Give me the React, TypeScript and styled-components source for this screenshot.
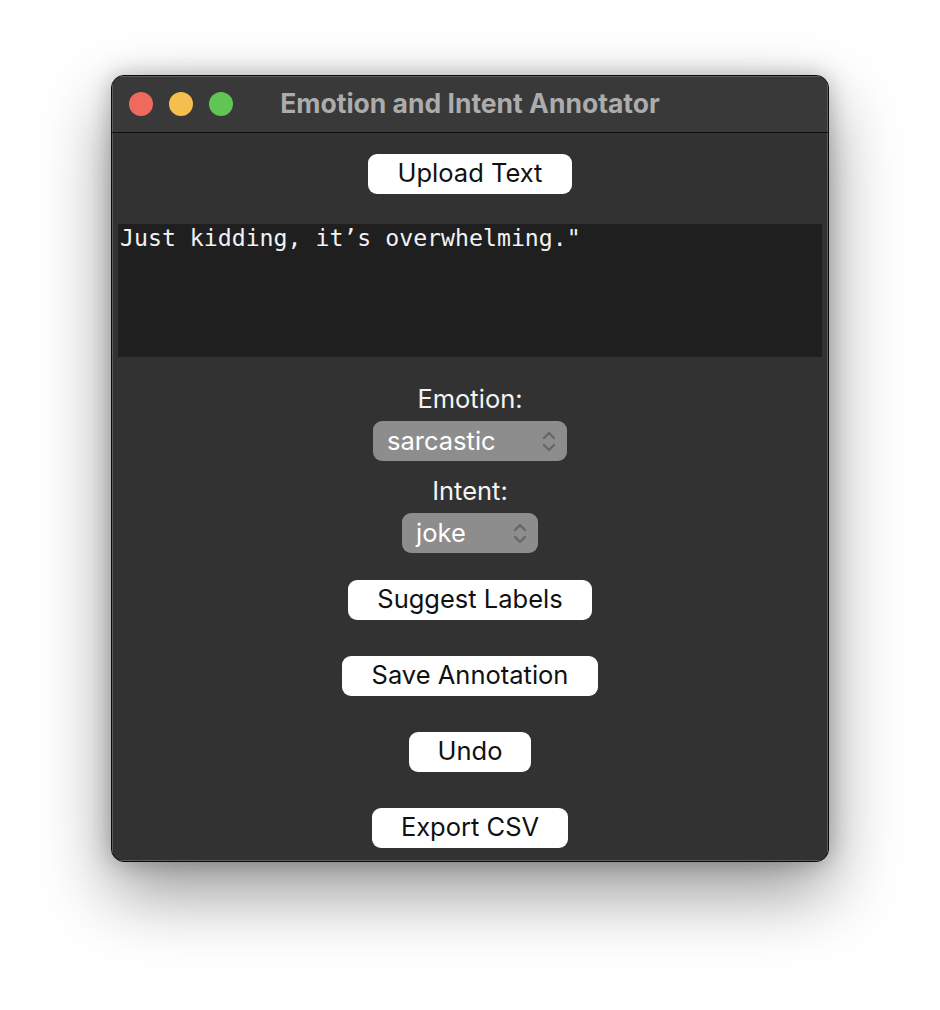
import React from "react";
import styled, { createGlobalStyle } from "styled-components";

const Global = createGlobalStyle`
  html, body { margin: 0; padding: 0; background: #ffffff; }
  body { font-family: "Inter", "Noto Sans", sans-serif; }
`;

const Page = styled.div`
  display: flex;
  justify-content: center;
  padding-top: 75px;
  height: 1010px;
  box-sizing: border-box;
`;

const Window = styled.div`
  width: 718px;
  height: 787px;
  box-sizing: border-box;
  border-radius: 13px;
  border: 1px solid #0a0a0a;
  background: #323232;
  box-shadow: 0 30px 70px rgba(0, 0, 0, 0.42), 0 0 22px rgba(0, 0, 0, 0.25);
  overflow: hidden;
  display: flex;
  flex-direction: column;
`;

const TitleBar = styled.div`
  height: 56px;
  flex: none;
  display: flex;
  align-items: center;
  position: relative;
  background: #393939;
  border-bottom: 1px solid #0e0e0e;
  padding-left: 17px;
  box-shadow: inset 0 1px 0 #5c5c5c, inset 1px 0 0 #5c5c5c, inset -1px 0 0 #5c5c5c;
`;

const Lights = styled.div`
  display: flex;
  gap: 16px;
`;

const Light = styled.span<{ $c: string }>`
  width: 24px;
  height: 24px;
  border-radius: 50%;
  background: ${(p) => p.$c};
`;

const Title = styled.div`
  position: absolute;
  left: 0;
  right: 0;
  top: 0;
  bottom: 3px;
  display: flex;
  align-items: center;
  justify-content: center;
  font-weight: 700;
  font-size: 26.5px;
  color: #acacac;
  pointer-events: none;
`;

const Content = styled.div`
  flex: 1;
  display: flex;
  flex-direction: column;
  align-items: center;
  padding: 21px 6px 0 6px;
  box-shadow: inset 1px 0 0 #5c5c5c, inset -1px 0 0 #5c5c5c, inset 0 -1px 0 #5c5c5c;
`;

const Button = styled.button<{ $w: number; $mt: number }>`
  width: ${(p) => p.$w}px;
  height: 40px;
  margin-top: ${(p) => p.$mt}px;
  background: #ffffff;
  color: #111;
  border: none;
  border-radius: 9px;
  font-family: "Inter", "Noto Sans", sans-serif;
  font-size: 25.5px;
  padding: 0 0 3px 0;
  box-sizing: border-box;
  display: flex;
  align-items: center;
  justify-content: center;
  flex: none;
`;

const TextArea = styled.div`
  align-self: stretch;
  height: 133px;
  margin-top: 30px;
  background: #1f1f1f;
  color: #f2f2f2;
  font-family: "DejaVu Sans Mono", monospace;
  font-size: 23.2px;
  line-height: 28px;
  padding: 0 2px;
  box-sizing: border-box;
  white-space: pre;
`;

const Label = styled.div<{ $mt: number }>`
  margin-top: ${(p) => p.$mt}px;
  height: 28px;
  line-height: 28px;
  color: #f4f4f4;
  font-size: 25.5px;
`;

const Select = styled.div<{ $w: number }>`
  margin-top: 8px;
  width: ${(p) => p.$w}px;
  height: 40px;
  box-sizing: border-box;
  border-radius: 9px;
  background: #8d8d8d;
  display: flex;
  align-items: center;
  justify-content: space-between;
  padding: 0 11px 1px 14px;
  color: #ffffff;
  font-size: 25.5px;
`;

const Chevrons = () => (
  <svg width="14" height="26" viewBox="0 0 14 26" fill="none">
    <path d="M2 10 L7 5 L12 10" stroke="#666" strokeWidth="2.3" strokeLinecap="round" strokeLinejoin="round" />
    <path d="M2 17 L7 22 L12 17" stroke="#666" strokeWidth="2.3" strokeLinecap="round" strokeLinejoin="round" />
  </svg>
);

export default function App() {
  return (
    <>
      <Global />
      <Page>
        <Window>
          <TitleBar>
            <Lights>
              <Light $c="#ee6a5e" />
              <Light $c="#f5bf4f" />
              <Light $c="#61c554" />
            </Lights>
            <Title>Emotion and Intent Annotator</Title>
          </TitleBar>
          <Content>
            <Button $w={204} $mt={0}>Upload Text</Button>
            <TextArea>{"Just kidding, it\u2019s overwhelming.\""}</TextArea>
            <Label $mt={28}>Emotion:</Label>
            <Select $w={194}>
              <span>sarcastic</span>
              <Chevrons />
            </Select>
            <Label $mt={16}>Intent:</Label>
            <Select $w={136}>
              <span>joke</span>
              <Chevrons />
            </Select>
            <Button $w={244} $mt={27}>Suggest Labels</Button>
            <Button $w={256} $mt={36}>Save Annotation</Button>
            <Button $w={122} $mt={36}>Undo</Button>
            <Button $w={196} $mt={36}>Export CSV</Button>
          </Content>
        </Window>
      </Page>
    </>
  );
}
